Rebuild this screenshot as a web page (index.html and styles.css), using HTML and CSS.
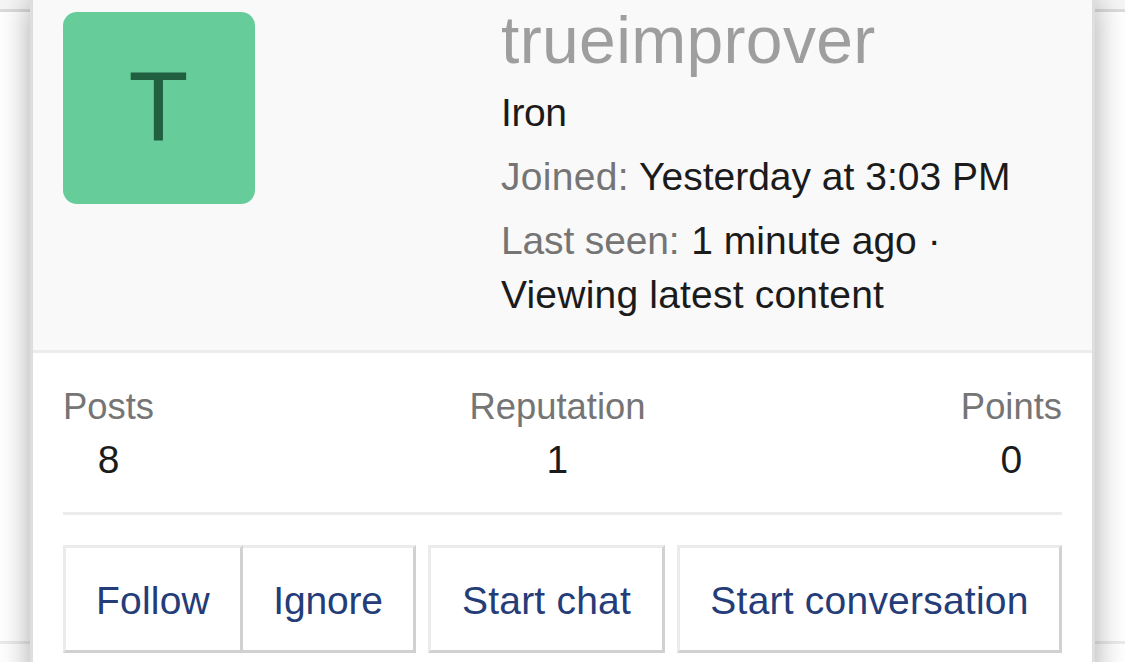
FILE: index.html
```html
<!DOCTYPE html>
<html lang="en">
<head>
  <meta charset="UTF-8">
  <meta name="viewport" content="width=device-width, initial-scale=1.0">
  <title>trueimprover</title>
  <link rel="stylesheet" href="styles.css">
</head>
<body>
  <div class="page">
    <div class="page-top"></div>
    <div class="page-row"></div>
  </div>

  <div class="tooltip">
    <div class="member-header">
      <div class="avatar"><span>T</span></div>
      <div class="member-info">
        <h4 class="name">trueimprover</h4>
        <div class="blurb title">Iron</div>
        <div class="blurb"><span class="label joined">Joined:</span> <span>Yesterday at 3:03 PM</span></div>
        <div class="blurb"><span class="label seen">Last seen:</span> <span class="ago">1 minute ago ·</span><br><span class="activity">Viewing latest content</span></div>
      </div>
    </div>

    <div class="member-body">
      <div class="stats">
        <dl><dt>Posts</dt><dd>8</dd></dl>
        <dl><dt>Reputation</dt><dd>1</dd></dl>
        <dl><dt>Points</dt><dd>0</dd></dl>
      </div>
      <hr>
      <div class="buttons">
        <div class="button-group">
          <a class="button follow">Follow</a>
          <a class="button ignore">Ignore</a>
        </div>
        <a class="button chat">Start chat</a>
        <a class="button conversation">Start conversation</a>
      </div>
    </div>
  </div>
</body>
</html>
```

FILE: styles.css
```css
* {
  box-sizing: border-box;
}
body {
  margin: 0;
  height: 662px;
  overflow: hidden;
  position: relative;
  background-color: #fff;
  color: #1b1b1b;
  font-family: "Liberation Sans", Arial, sans-serif;
  font-size: 39px;
  line-height: 54px;
}
.page-top {
  height: 12px;
  background-color: #f6f6f6;
  border-bottom: 3px solid #dcdcdc;
}
.page-row {
  height: 632px;
  border-bottom: 3px solid #ebebeb;
}

/* member card, lies over the page */
.tooltip {
  position: absolute;
  top: -24px;
  left: 30px;
  width: 1065px;
  height: 686px;
  background-color: #fff;
  border: solid #dedede;
  border-width: 0 3px;
  box-shadow: 0 24px 30px rgba(0, 0, 0, 0.35);
}
.member-header {
  display: flex;
  height: 377px;
  padding: 24px 30px 0;
  background-color: #f9f9f9;
  border-bottom: 3px solid #ececec;
}
.avatar {
  display: flex;
  align-items: center;
  justify-content: center;
  width: 192px;
  height: 192px;
  margin-top: 12px;
  margin-right: 246px;
  padding-right: 1px;
  padding-bottom: 5px;
  border-radius: 14px;
  background-color: #66cc99;
  color: #206040;
  font-size: 98px;
  line-height: 1;
}
.member-info {
  white-space: nowrap;
}
.name {
  margin: 0 0 7px;
  padding-top: 1px;
  color: #9e9e9e;
  font-size: 66px;
  font-weight: normal;
  letter-spacing: 0.35px;
  line-height: 78px;
}
.blurb {
  margin-bottom: 10px;
}
.title {
  letter-spacing: -0.4px;
}
.label,
dt {
  color: #757575;
}
.joined {
  letter-spacing: 0.3px;
}
.seen {
  letter-spacing: -0.15px;
}
.ago {
  margin-left: 1px;
}
.activity {
  letter-spacing: 0.2px;
}
.member-body {
  padding: 27px 30px 0;
}
.stats {
  display: flex;
  justify-content: space-between;
  text-align: center;
}
dl,
dd {
  margin: 0;
}
dt {
  font-size: 36.4px;
  line-height: 53px;
}
hr {
  height: 3px;
  margin: 25px 0 30px;
  border: 0;
  background-color: #ececec;
}
.buttons {
  display: flex;
  justify-content: space-between;
}
.button-group {
  display: flex;
}
.button {
  height: 108px;
  padding-top: 26px;
  border: 3px solid;
  border-color: #ebebeb #d1d1d1 #d1d1d1 #ebebeb;
  color: #243c78;
  letter-spacing: 0.22px;
  text-align: center;
  white-space: nowrap;
}
.follow {
  width: 180px;
}
.ignore {
  width: 173px;
  border-left: 0;
  letter-spacing: -0.2px;
}
.chat {
  width: 237px;
}
.conversation {
  width: 385px;
}
```
